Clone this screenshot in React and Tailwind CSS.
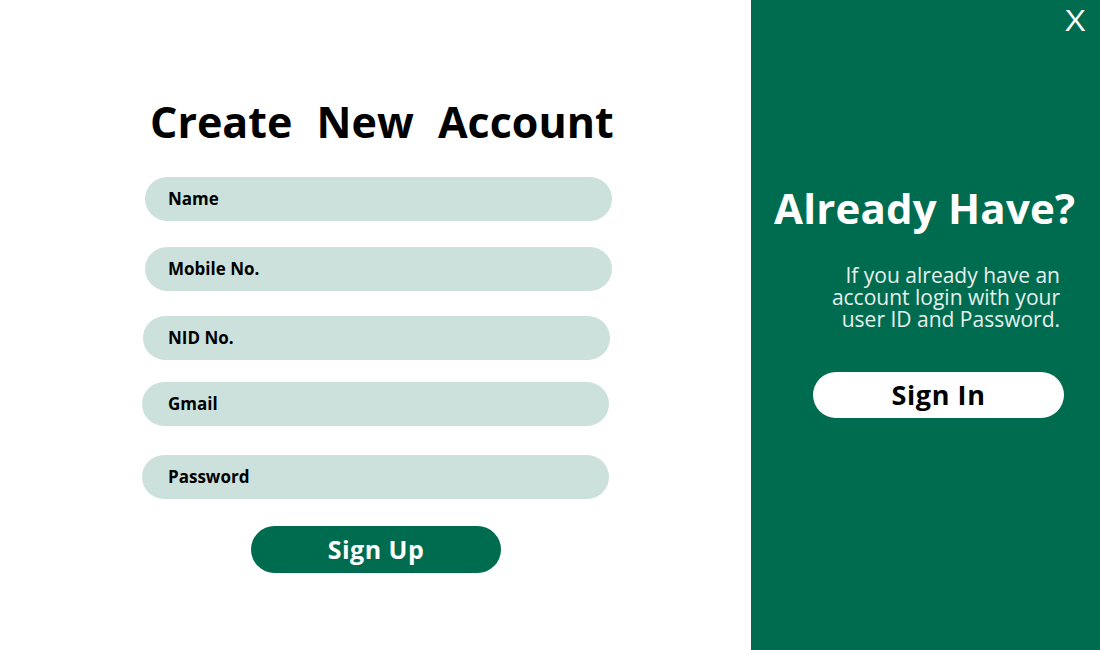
export default function App() {
  const fields = [
    { label: "Name", cls: "ml-[145px] mt-[25px] pl-[23px]" },
    { label: "Mobile No.", cls: "ml-[145px] mt-[26px] pl-[23px]" },
    { label: "NID No.", cls: "ml-[143px] mt-[25px] pl-[25px]" },
    { label: "Gmail", cls: "ml-[142px] mt-[22px] pl-[26px]" },
    { label: "Password", cls: "ml-[142px] mt-[29px] pl-[26px]" },
  ];
  return (
    <div
      className="flex w-[1100px] h-[650px] bg-white overflow-hidden"
      style={{ fontFamily: '"Open Sans", "Noto Sans", sans-serif' }}
    >
      <div className="w-[751px] h-full flex flex-col">
        <h1 className="mt-[92px] ml-[150px] text-[43px] leading-[60px] font-bold text-black [word-spacing:13px] whitespace-nowrap">
          Create New Account
        </h1>
        {fields.map((f) => (
          <div
            key={f.label}
            className={`${f.cls} w-[467px] h-[44px] rounded-full bg-[#cce1dc] flex items-center text-[17px] font-bold text-black`}
          >
            {f.label}
          </div>
        ))}
        <button className="mt-[27px] ml-[251px] w-[250px] h-[47px] rounded-full bg-[#006c4f] text-white text-[25px] tracking-[0.5px] font-bold flex items-center justify-center">
          Sign Up
        </button>
      </div>
      <div className="flex-1 h-full bg-[#006c4f] relative flex flex-col">
        <div className="absolute top-[2px] right-[16px] text-white text-[29px] leading-[36px] font-normal scale-x-[1.2]">X</div>
        <h2 className="mt-[180px] ml-[23px] text-[42px] leading-[56px] font-bold text-white whitespace-nowrap tracking-[0.2px]">
          Already Have?
        </h2>
        <p className="mt-[28px] mr-[40px] text-right text-white/90 text-[21px] leading-[22px] font-normal">
          If you already have an
          <br />
          account login with your
          <br />
          user ID and Password.
        </p>
        <button className="mt-[42px] ml-[62px] w-[251px] h-[46px] rounded-full bg-white text-black text-[27px] tracking-[0.6px] font-bold flex items-center justify-center">
          Sign In
        </button>
      </div>
    </div>
  );
}
